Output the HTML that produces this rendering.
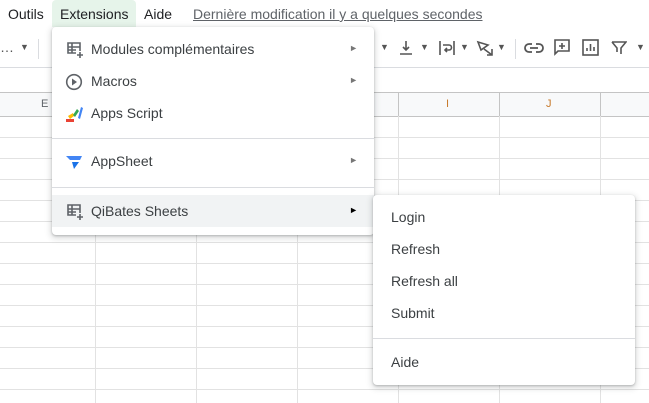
<!DOCTYPE html>
<html><head><style>
*{margin:0;padding:0;box-sizing:border-box}
body{width:649px;height:403px;overflow:hidden;background:#fff;font-family:"Liberation Sans",Arial,sans-serif;color:#202124;position:relative}
.abs{position:absolute}
.menubar{top:0;left:0;height:27px;width:649px;font-size:14px}
.menubar span{position:absolute;top:6px}
.grid{top:92px;left:0;width:649px;height:311px}
.hline{position:absolute;left:0;width:649px;height:1px;background:#e2e2e2}
.vline{position:absolute;top:24px;bottom:0;width:1px;background:#e2e2e2}
.menu{background:#fff;border-radius:4px;box-shadow:0 2px 6px 2px rgba(60,64,67,.15),0 1px 2px rgba(60,64,67,.3)}
.item{position:absolute;left:0;right:0;height:32px;font-size:14px;color:#3c4043}
.item .t{position:absolute;left:39px;top:8px}
.item .ar{position:absolute;right:16px;top:10px;font-size:9px;color:#777}
.sep{position:absolute;left:0;right:0;height:1px;background:#dadce0}
.sub .item .t{left:18px}
</style></head><body>
<div class="abs menubar">
<span style="left:8px">Outils</span>
<div class="abs" style="left:52px;top:0;width:84px;height:27px;background:#e6f4ea;border-radius:4px 4px 0 0"></div>
<span style="left:60px">Extensions</span>
<span style="left:144px">Aide</span>
<span style="left:193px;color:#5f6368;text-decoration:underline">Dernière modification il y a quelques secondes</span>
</div>
<!-- toolbar -->
<div class="abs" style="top:28px;left:0;width:649px;height:40px;border-bottom:1px solid #dadce0;font-size:14px;color:#555">
<span class="abs" style="left:0;top:11px">…</span>
<span class="abs" style="left:20px;top:14px;font-size:9px">▼</span>
<div class="abs" style="left:38px;top:11px;width:1px;height:20px;background:#dadce0"></div>
<span class="abs" style="left:380px;top:14px;font-size:9px">▼</span>
<svg class="abs" style="left:398px;top:12px" width="16" height="16" viewBox="0 0 16 16" fill="none" stroke="#555" stroke-width="1.6"><path d="M8 1v9M5 7l3 3 3-3M2 14h12"/></svg>
<span class="abs" style="left:420px;top:14px;font-size:9px">▼</span>
<svg class="abs" style="left:438px;top:11px" width="18" height="18" viewBox="0 0 18 18" fill="none" stroke="#555" stroke-width="1.6"><path d="M2 2v14M16 2v14M5 6h6a2 2 0 0 1 0 5H7M9 9l-2 2 2 2"/></svg>
<span class="abs" style="left:460px;top:14px;font-size:9px">▼</span>
<svg class="abs" style="left:476px;top:11px" width="18" height="18" viewBox="0 0 18 18" fill="none" stroke="#555" stroke-width="1.6"><path d="M2 3l10 3-7 5zM8 10l8 6M16 10v6h-5"/></svg>
<span class="abs" style="left:497px;top:14px;font-size:9px">▼</span>
<div class="abs" style="left:515px;top:11px;width:1px;height:20px;background:#dadce0"></div>
<svg class="abs" style="left:524px;top:10px" width="20" height="20" viewBox="0 0 20 20" fill="none" stroke="#555" stroke-width="1.8"><path d="M8 6H5a4 4 0 0 0 0 8h3M12 6h3a4 4 0 0 1 0 8h-3M6 10h8"/></svg>
<svg class="abs" style="left:553px;top:10px" width="18" height="18" viewBox="0 0 18 18" fill="none" stroke="#555" stroke-width="1.6"><path d="M2 2h14v11H5l-3 3z M9 5v6M6 8h6"/></svg>
<svg class="abs" style="left:582px;top:11px" width="17" height="17" viewBox="0 0 17 17" fill="none" stroke="#555" stroke-width="1.6"><rect x="1" y="1" width="15" height="15"/><path d="M5 12V9M8.5 12V5M12 12V8"/></svg>
<svg class="abs" style="left:611px;top:12px" width="16" height="16" viewBox="0 0 16 16" fill="none" stroke="#555" stroke-width="1.6"><path d="M1 2h14l-5 6v6M1 2l5 6v4"/></svg>
<span class="abs" style="left:636px;top:14px;font-size:9px">▼</span>
</div>
<!-- grid -->
<div class="abs grid">
<div class="abs" style="left:0;top:0;width:649px;height:24px;background:#f8f9fa"></div>
<span class="abs" style="left:41px;top:6px;font-size:11px;color:#5f6368">E</span>
<span class="abs" style="left:446px;top:6px;font-size:11px;color:#c77a2b">I</span>
<span class="abs" style="left:546px;top:6px;font-size:11px;color:#c77a2b">J</span>
<div class="hline" style="top:0;background:#c4c4c4"></div>
<div class="hline" style="top:24px;background:#c4c4c4"></div>
<div class="vline" style="left:95px"></div><div class="vline" style="left:196px"></div><div class="vline" style="left:297px"></div><div class="vline" style="left:398px"></div><div class="vline" style="left:499px"></div><div class="vline" style="left:600px"></div>
<div class="vline" style="top:0;height:24px;left:398px;background:#c4c4c4"></div><div class="vline" style="top:0;height:24px;left:499px;background:#c4c4c4"></div><div class="vline" style="top:0;height:24px;left:600px;background:#c4c4c4"></div>
<div class="hline" style="top:45px"></div><div class="hline" style="top:66px"></div><div class="hline" style="top:87px"></div><div class="hline" style="top:108px"></div><div class="hline" style="top:129px"></div><div class="hline" style="top:150px"></div><div class="hline" style="top:171px"></div><div class="hline" style="top:192px"></div><div class="hline" style="top:213px"></div><div class="hline" style="top:234px"></div><div class="hline" style="top:255px"></div><div class="hline" style="top:276px"></div><div class="hline" style="top:297px"></div>
</div>
<!-- main menu -->
<div class="abs menu" style="left:52px;top:27px;width:322px;height:208px">
<div class="item" style="top:6px">
<svg class="abs" style="left:14px;top:8px" width="18" height="18" viewBox="0 0 18 18" fill="none" stroke="#5f6368" stroke-width="1.6"><path d="M10 12H2V2h12v8M2 6h12M2 9h8M6 2v10M14 11v6M11 14h6"/></svg>
<span class="t">Modules complémentaires</span><span class="ar">►</span></div>
<div class="item" style="top:38px">
<svg class="abs" style="left:13px;top:8px" width="18" height="18" viewBox="0 0 18 18"><circle cx="9" cy="9" r="7.3" fill="none" stroke="#5f6368" stroke-width="1.6"/><path d="M7 5.5v7l5-3.5z" fill="#5f6368"/></svg>
<span class="t">Macros</span><span class="ar">►</span></div>
<div class="item" style="top:70px">
<svg class="abs" style="left:13px;top:9px" width="18" height="16" viewBox="0 0 18 16"><path d="M1 13h8v3H1z" fill="#ea4335"/><path d="M3 10l5-3 1 3-4 3z" fill="#fbbc04"/><path d="M8 9l4-6 2 2-4 6z" fill="#34a853"/><path d="M13 12l3-11 2 1-3 11z" fill="#4285f4"/></svg>
<span class="t">Apps Script</span></div>
<div class="sep" style="top:111px"></div>
<div class="item" style="top:118px">
<svg class="abs" style="left:14px;top:11px" width="16" height="13" viewBox="0 0 16 13"><path d="M0 0h16l-2 4H4z" fill="#4285f4"/><path d="M6 6h7l-5 7z" fill="#1a73e8"/></svg>
<span class="t">AppSheet</span><span class="ar">►</span></div>
<div class="sep" style="top:160px"></div>
<div class="item" style="top:168px;height:32px;background:#f1f3f4">
<svg class="abs" style="left:14px;top:8px" width="18" height="18" viewBox="0 0 18 18" fill="none" stroke="#5f6368" stroke-width="1.6"><path d="M10 12H2V2h12v8M2 6h12M2 9h8M6 2v10M14 11v6M11 14h6"/></svg>
<span class="t">QiBates Sheets</span><span class="ar" style="color:#000">►</span></div>
</div>
<!-- submenu -->
<div class="abs menu sub" style="left:373px;top:195px;width:262px;height:190px">
<div class="item" style="top:6px"><span class="t">Login</span></div>
<div class="item" style="top:38px"><span class="t">Refresh</span></div>
<div class="item" style="top:70px"><span class="t">Refresh all</span></div>
<div class="item" style="top:102px"><span class="t">Submit</span></div>
<div class="sep" style="top:143px"></div>
<div class="item" style="top:151px"><span class="t">Aide</span></div>
</div>
</body></html>
